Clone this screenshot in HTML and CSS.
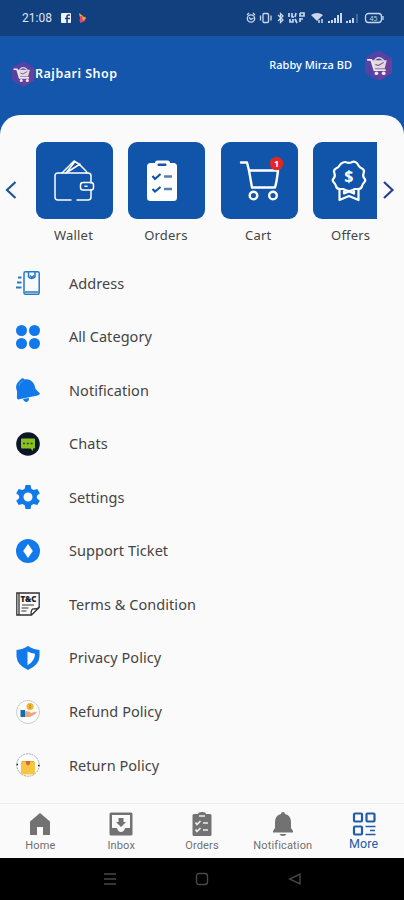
FILE: index.html
```html
<!DOCTYPE html>
<html lang="en">
<head>
  <meta charset="UTF-8" />
  <meta name="viewport" content="width=device-width, initial-scale=1.0"/>
  <title>Rajbari Shop</title>
  <link rel="stylesheet" href="styles.css">
</head>

<body>
  <!-- shared logo -->
  <svg width="0" height="0" class="defs">
    <symbol id="logo" viewBox="0 0 28 30">
      <path d="M14 0 27 7.500v15L14 30 1 22.500V7.500z" fill="#5542a4"/>
      <path d="M14 15 27 7.500v15L14 30z" fill="#69409b"/>
      <path d="M7 10h15l-2 8H10z" fill="#e3d9df"/>
      <path d="M3 9.500h4l3 10h11" fill="none" stroke="#f2e8e8" stroke-width="1.800"/>
      <path d="M10 10q4-5 9 0" fill="none" stroke="#e3d9df" stroke-width="1.300"/>
      <path d="M11 14l3 1 5-3" fill="none" stroke="#66518d" stroke-width="1"/>
      <circle cx="12" cy="22.500" r="1.800" fill="#f2e8e8"/><circle cx="19" cy="22.500" r="1.800" fill="#f2e8e8"/>
    </symbol>
  </svg>

  <!-- STATUS BAR -->
  <div class="status">
    <span class="time">21:08</span>
    <svg class="apps" width="28" height="12" viewBox="0 0 28 12">
      <rect x="0" y="1" width="10" height="10" rx="1" fill="#eef4ff"/>
      <path d="M9 3H7.500Q6 3 6 5v6M4 6.500h5" fill="none" stroke="#174481" stroke-width="1.600"/>
      <path d="M18 1l4 3-3 2z" fill="#f1a53b"/><path d="M19 4l6 1-1 4-5 2z" fill="#e84a58"/><path d="M21 4l4 2-3 3z" fill="#e9a637"/><path d="M18 8l3-1-1 4z" fill="#a554bc"/>
    </svg>
    <svg class="signals" width="140" height="14" viewBox="0 0 140 14" fill="none" stroke="#c9d8ee" stroke-width="1.300">
      <circle cx="5" cy="7.500" r="3.700"/><path d="M1 4l2-2M9 4 7 2M3 6.500l2 2 2.500-1.500"/>
      <rect x="17" y="2.500" width="5.500" height="9" rx="1"/><path d="M14.500 4.500v5M25 4.500v5"/>
      <path d="M32 4l5 5-2.500 2.500v-9L37 5l-5 5"/>
      <path d="M43 2v4M46 2v4h2M50 2l-1 4M54 2v3h4V2h-4M44 8v3h3V8M49 8l2 4M54 7v4M57 8h-3" stroke-width="1.700"/>
      <path d="M65 4q6-4 12 0l-6 6z" fill="#c9d8ee" stroke="none"/><path d="M73 9v3M76 8v4" stroke-width="1.500"/>
      <path d="M83 12v-2M86 12V9M89 12V7M92 12V4M95 12V2" stroke-width="2"/>
      <path d="M101 12v-2M104 12V9M107 12V7" stroke-width="2"/><path d="M111 12V3" stroke="#6f91bf" stroke-width="1"/>
      <rect x="119.500" y="2.500" width="16" height="9" rx="3"/><path d="M137 5v4"/>
      <text x="123.500" y="10" font-size="7" fill="#c9d8ee" stroke="none">45</text>
    </svg>
  </div>

  <!-- HEADER -->
  <div class="header">
    <div class="brand">
      <svg width="24" height="26"><use href="#logo"/></svg>
      <span>Rajbari Shop</span>
    </div>
    <div class="user">
      <span>Rabby Mirza BD</span>
      <svg width="29" height="31"><use href="#logo"/></svg>
    </div>
  </div>

  <div class="sheet">
    <!-- SHORTCUTS -->
    <div class="shortcuts">
      <svg class="arrow" width="36" height="20" viewBox="0 0 36 20"><path d="M15.500 2 7 10l8.500 8"/></svg>
      <div class="tiles">
        <div class="tile">
          <svg width="77" height="77" viewBox="0 0 77 77" fill="none" stroke="#fff" stroke-width="1.500" stroke-linecap="round" stroke-linejoin="round">
            <path d="M35 58H22q-3 0-3-3V34q0-3 3-3h30q3 0 3 3v7M55 48v7q0 3-3 3H41"/>
            <rect x="44.500" y="40.500" width="13" height="7.500" rx="2.500"/><path d="M49 44.200h2"/>
            <path d="m26 31 12-12 5 3 7 7 1 2M30 31l14-9M39 19.500 30 31"/>
          </svg>
          <span>Wallet</span>
        </div>
        <div class="tile">
          <svg width="77" height="77" viewBox="0 0 77 77">
            <rect x="19" y="21" width="30" height="38" rx="3.500" fill="#fff"/><rect x="27" y="18.500" width="15" height="7" rx="2.500" fill="#fff"/>
            <rect x="29.500" y="21.500" width="9" height="2.500" rx="1" fill="#1055aa"/>
            <path d="m24.500 34 2.500 3 5.500-5M24.500 47l2.500 2.500 5.500-4.500" fill="none" stroke="#1055aa" stroke-width="2.200"/>
            <path d="M36 34.500h8M36 47h8" stroke="#597fae" stroke-width="2.400"/>
          </svg>
          <span>Orders</span>
        </div>
        <div class="tile">
          <svg width="77" height="77" viewBox="0 0 77 77" fill="none" stroke="#fff" stroke-width="2.400" stroke-linecap="round" stroke-linejoin="round">
            <path d="M20 20.500h6l2 8 3 17h23q1.800-6 3-17H28"/>
            <circle cx="32.500" cy="53.500" r="3.800"/><circle cx="52" cy="53.500" r="3.800"/>
            <circle cx="55.500" cy="21.500" r="6.800" fill="#df2726" stroke="none"/>
            <text class="badge" x="53" y="25" stroke="none">1</text>
          </svg>
          <span>Cart</span>
        </div>
        <div class="tile">
          <svg width="77" height="77" viewBox="0 0 77 77" fill="none" stroke="#fff" stroke-width="2.200" stroke-linejoin="round">
            <path d="M30 20.500q2-1 4 0 2 .8 4 0 5-2.500 7.500 3 1 2 3.500 3 3 1.500 1.500 5-1 3 1 5 1.500 2 0 3.500-2 2-2.500 4-.5 3-4 3h-3q-3 2-6 2t-6-2h-3q-3.500 0-4-3-.5-2-2.500-4-1.500-1.500 0-3.500 2-2 1-5-1.500-3.500 1.500-5 2.500-1 3.500-3 1-2 3.500-3z"/>
            <path d="M26.500 47V58l9.500-4 9.500 4V47M31 49v2.500l5-2 5 2V49"/>
            <text class="dollar" x="31.300" y="40.300" stroke="none">$</text>
          </svg>
          <span>Offers</span>
        </div>
      </div>
      <svg class="arrow next" width="27" height="20" viewBox="0 0 27 20"><path d="m7 2 8.500 8L7 18"/></svg>
    </div>

    <!-- MENU LIST -->
    <div class="menu">
      <div class="row">
        <svg viewBox="0 0 24 24" fill="none" stroke="#237ac7" stroke-width="1.500"><rect x="8" y=".8" width="15.200" height="22.400" rx="1.500"/><path d="M9 21h13.500M12.500 1v5q3 3 6.500 0V1M14 4.500l1.800 2L18 4.500"/><path d="M2 6.500h3.500M1 11.500h4.500M0 16.500h5.500" stroke-width="2"/></svg>
        <span>Address</span>
      </div>
      <div class="row">
        <svg viewBox="0 0 24 24" fill="#1279ea"><circle cx="5.500" cy="5.500" r="5.500"/><circle cx="18.500" cy="5.500" r="5.500"/><circle cx="5.500" cy="18.500" r="5.500"/><circle cx="18.500" cy="18.500" r="5.500"/></svg>
        <span>All Category</span>
      </div>
      <div class="row">
        <svg viewBox="0 0 24 24" fill="#1279ea"><path d="M4.500 1.500Q7-1 8.500 1.500c7-1 10 4 11 9.500l4.500 4.500q-1 2-5 2.500L2 21.500Q.5 21 1 17.500V13Q-2 7 4.500 1.500z"/><path d="M7 21 13 20q0 4-3 4-2 0-3-3z"/><path d="M3 8q0-4 4-5" fill="none" stroke="#3da5f6"/></svg>
        <span>Notification</span>
      </div>
      <div class="row">
        <svg viewBox="0 0 24 24"><circle cx="12" cy="12" r="11.800" fill="#0b1727"/><path d="M6 6.500h12q1 0 1 1v8q0 1-1 1h-1v2.500L14.500 16.500H6q-1 0-1-1v-8q0-1 1-1z" fill="#8bc01f"/><path d="M7 11.500h10" stroke="#284218" stroke-width="1.600" stroke-dasharray="2 1.800"/></svg>
        <span>Chats</span>
      </div>
      <div class="row">
        <svg viewBox="0 0 24 24"><path fill="#1279ea" fill-rule="evenodd" d="M9.500 0h5l.8 3.800 2.300 1.300 3.700-1.200 2.500 4.300-2.900 2.500v2.600l2.900 2.500-2.500 4.300-3.700-1.200-2.300 1.300-.8 3.800h-5l-.8-3.800-2.300-1.300-3.700 1.200L.2 15.800l2.900-2.500v-2.600L.2 8.200l2.500-4.300 3.700 1.200 2.300-1.300zM12 7.500a4.500 4.500 0 1 0 0 9 4.500 4.500 0 0 0 0-9z"/></svg>
        <span>Settings</span>
      </div>
      <div class="row">
        <svg viewBox="0 0 24 24"><circle cx="12" cy="12" r="12" fill="#1279ea"/><path d="m12 5 4.800 7-4.800 7-4.800-7z" fill="#fff"/></svg>
        <span>Support Ticket</span>
      </div>
      <div class="row">
        <svg viewBox="0 0 24 24" fill="none" stroke="#333" stroke-width="1.300"><path d="M.8 1h22.400v14.500L15.500 23H.8zM3 1v22M15 23q0-7 3-6 4 0 5-2"/><path d="M6 13h12M5.500 16h7M5.500 19h5" stroke="#777"/><text class="tc" x="4.500" y="9.500" textLength="16" lengthAdjust="spacingAndGlyphs">T&amp;C</text></svg>
        <span>Terms &amp; Condition</span>
      </div>
      <div class="row">
        <svg viewBox="0 0 24 24"><path d="M12 0q5 3.500 11.500 4v6.500Q23 19 12 24 1 19 .5 10.500V4Q7 3.500 12 0z" fill="#1279ea"/><path d="M11.500 5.500q4 2 7.500 2.200 0 7.300-7.500 11.500z" fill="#fff"/></svg>
        <span>Privacy Policy</span>
      </div>
      <div class="row">
        <svg viewBox="0 0 24 24"><circle cx="12" cy="12" r="11.400" fill="#fcfcfb" stroke="#aaa" stroke-width=".8" stroke-dasharray="1.500 .5"/><path d="m8 11 5 .5 2 1.500 5.500-1.500q1 1-2 3L14 17H8z" fill="#eda77e"/><path d="M4.500 10h4.500v7H4.500z" fill="#186bad"/><circle cx="14" cy="6.500" r="3.500" fill="#efb52c"/><path d="M14 4.500v4" stroke="#c47c14"/></svg>
        <span>Refund Policy</span>
      </div>
      <div class="row">
        <svg viewBox="0 0 24 24"><circle cx="12" cy="12" r="11.200" fill="#fff" stroke="#999" stroke-width=".9" stroke-dasharray="2 .8"/><path d="M.5 11.500h1.500M22 12.500h1.500" stroke="#222" stroke-width="1.600"/><rect x="5" y="8" width="14" height="13.500" rx="1.500" fill="#f7c544"/><path d="M6 8.500h12" stroke="#e6a72c"/><path d="M10 8h4v3l-2 1.500-2-1.500z" fill="#dc642e"/></svg>
        <span>Return Policy</span>
      </div>
    </div>
  </div>

  <!-- BOTTOM TABS -->
  <div class="tabs">
    <div class="tab">
      <svg width="24" height="24" viewBox="0 0 24 24" fill="#727272"><path d="M12 1 22 9.500V23h-7v-8H9v8H2V9.500z"/></svg>
      <span>Home</span>
    </div>
    <div class="tab">
      <svg width="24" height="24" viewBox="0 0 24 24"><path fill="#727272" fill-rule="evenodd" d="M2 .5h20q1.500 0 1.500 1.500v20q0 1.500-1.500 1.500H2Q.5 23.500.5 22V2Q.5.500 2 .500zM3 3v13h5q1 4 4 4t4-4h5V3z"/><path d="M9.500 6h5v4H17l-5 5-5-5h2.500z" fill="#727272"/></svg>
      <span>Inbox</span>
    </div>
    <div class="tab">
      <svg width="24" height="24" viewBox="0 0 24 24"><path d="M4 2h4q0-2 4-2t4 2h4q1.500 0 1.500 1.500v19q0 1.500-1.500 1.500H4q-1.500 0-1.500-1.500v-19Q2.500 2 4 2z" fill="#727272"/><path d="M9 4h6M5.500 10.500l1.500 2 3.500-3.500M5.500 17.500l1.500 2 3.500-3.500M13 11h5M13 18h5" fill="none" stroke="#eee" stroke-width="1.700"/></svg>
      <span>Orders</span>
    </div>
    <div class="tab">
      <svg width="24" height="24" viewBox="0 0 24 24" fill="#727272"><path d="M10 2q0-2 2-2t2 2q6 1.500 6 8v6l2 3v1.500H2V19l2-3v-6q0-6.500 6-8zM8.500 22h7q-1 2-3.500 2t-3.500-2z"/></svg>
      <span>Notification</span>
    </div>
    <div class="tab active">
      <svg width="24" height="24" viewBox="0 0 24 24" fill="none" stroke="#205ca8" stroke-width="2.200"><rect x="2" y="1.500" width="8" height="8" rx="1"/><rect x="14.500" y="1.500" width="8" height="8" rx="1"/><rect x="2" y="14.500" width="8" height="8" rx="1"/><path d="M13.500 14.500h10M18 18.500h5M13.500 22.500h10" stroke-width="1.700"/></svg>
      <span>More</span>
    </div>
  </div>

  <!-- ANDROID NAV -->
  <div class="android">
    <svg width="12" height="14" viewBox="0 0 12 14"><path d="M0 2h12M0 7h12M0 12h12"/></svg>
    <svg width="14" height="14" viewBox="0 0 14 14"><rect x="1.500" y="1.500" width="11" height="11" rx="2.500"/></svg>
    <svg width="14" height="14" viewBox="0 0 14 14"><path d="M12 2v10L1.500 7z"/></svg>
  </div>
</body>
</html>
```
FILE: styles.css
```css
* {
  box-sizing: border-box;
}

body {
  margin: 0;
  width: 404px;
  height: 900px;
  display: flex;
  flex-direction: column;
  overflow: hidden;
  font-family: "Noto Sans", "Open Sans", sans-serif;
  background: #1456ac;
  color: #444;
}

svg {
  display: block;
  flex: none;
}

.defs {
  position: absolute;
}

.status {
  height: 36px;
  flex: none;
  display: flex;
  align-items: center;
  padding: 0 18px 0 22px;
  background: #123f7e;
  color: #dce7f6;
}

.time {
  width: 39px;
  font: 12px Roboto, sans-serif;
}

.signals {
  margin-left: auto;
}

.header {
  height: 79px;
  flex: none;
  display: flex;
  justify-content: space-between;
  padding: 13px 11px 0;
  color: #fff;
  font-weight: 600;
}

.brand {
  display: flex;
  align-items: center;
  height: 49px;
  font-size: 12.5px;
  letter-spacing: 0.5px;
}

.user {
  display: flex;
  align-items: center;
  gap: 12px;
  height: 32px;
  font-size: 11px;
  font-weight: 500;
}

.user span {
  margin-top: -2px;
}

.sheet {
  flex: 1;
  background: #fafafa;
  border-radius: 20px 20px 0 0;
  padding-top: 27px;
}

.shortcuts {
  display: flex;
  height: 114.4px;
}

.arrow {
  margin-top: 38px;
  fill: none;
  stroke: #1f5596;
  stroke-width: 2.2;
}

.next {
  stroke: #263f91;
}

.tiles {
  width: 341px;
  display: flex;
  gap: 15.4px;
  overflow: hidden;
}

.tile {
  width: 77px;
  flex: none;
  font-size: 13px;
  text-align: center;
}

.tile > svg {
  background: #1055aa;
  border-radius: 9px;
  margin-bottom: 7px;
}

.tile > span {
  display: block;
  line-height: 18px;
  letter-spacing: 0.2px;
  margin-left: -2px;
}

.badge {
  font-size: 9px;
  font-weight: bold;
  fill: #fff;
}

.dollar {
  font-size: 16px;
  font-weight: bold;
  fill: #fff;
}

.row {
  height: 53.55px;
  display: flex;
  align-items: center;
  gap: 29px;
  padding-left: 16px;
  font-size: 14.5px;
}

.row > span {
  letter-spacing: 0.05px;
  margin-top: -1px;
}

.row > svg {
  width: 24px;
  height: 24px;
}

.tc {
  font-size: 8px;
  font-weight: 900;
  fill: #222;
  stroke: none;
}

.tabs {
  height: 55px;
  flex: none;
  display: grid;
  grid-template-columns: repeat(5, 1fr);
  background: #fafafa;
  border-top: 1px solid #eee;
}

.tab {
  display: flex;
  flex-direction: column;
  align-items: center;
  padding-top: 8px;
  font: 11px/15px Roboto, sans-serif;
  letter-spacing: 0.15px;
  color: #707070;
}

.tab span {
  margin-top: 1.5px;
}

.active {
  color: #205ca8;
  font-size: 12.5px;
}

.active span {
  margin-top: 0;
}

.android {
  height: 42px;
  flex: none;
  display: flex;
  align-items: center;
  justify-content: center;
  gap: 79px;
  padding-left: 2px;
  background: #000;
  fill: none;
  stroke: #484848;
  stroke-width: 1.4;
}
```
